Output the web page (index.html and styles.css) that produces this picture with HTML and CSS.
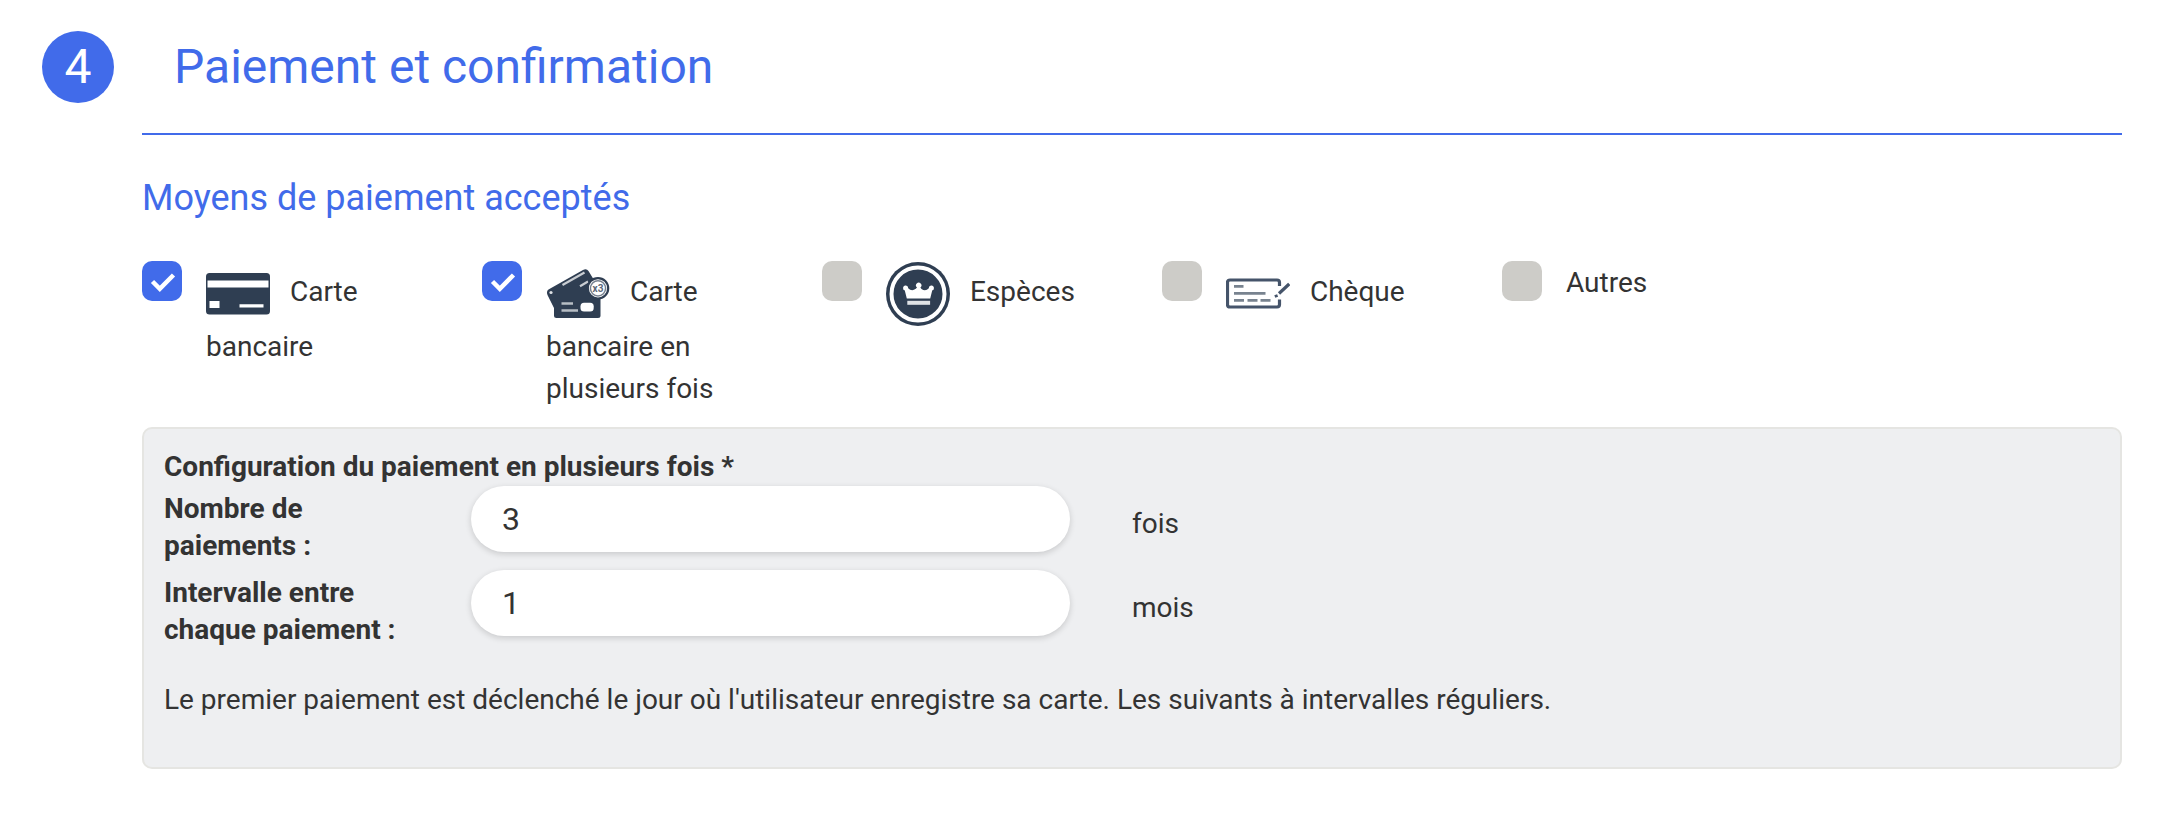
FILE: index.html
```html
<!DOCTYPE html>
<html lang="fr">

<head>
  <meta charset="UTF-8">
  <meta name="viewport" content="width=device-width, initial-scale=1.0">
  <title>Paiement et confirmation</title>
  <link rel="stylesheet" href="styles.css">
</head>

<body>
  <section class="step">
    <header class="step-header">
      <span class="step-number">4</span>
      <h1 class="step-title">Paiement et confirmation</h1>
    </header>

    <div class="step-body">
      <h2 class="section-title">Moyens de paiement acceptés</h2>

      <div class="methods">
        <div class="method">
          <span class="checkbox checked">
            <svg viewBox="0 0 40 40"><path d="M10.500 20.500l7.300 7.300L31.500 14" /></svg>
          </span>
          <div class="method-label">
            <svg class="method-icon" viewBox="0 0 64 64">
              <rect x="0" y="11" width="64" height="41.5" rx="3.5" fill="#2f3e52" />
              <path fill="#fff" d="M1.500 18.500h61v7h-61zM3.500 39h10v7h-10zM33.500 42.300h24v3.200h-24z" />
            </svg>
            <span>Carte</span> bancaire
          </div>
        </div>

        <div class="method">
          <span class="checkbox checked">
            <svg viewBox="0 0 40 40"><path d="M10.500 20.500l7.300 7.300L31.500 14" /></svg>
          </span>
          <div class="method-label">
            <svg class="method-icon" viewBox="0 0 64 64">
              <path fill="#2f3e52" d="M2.500 27.500L37 8q3.500-2 5.500 1L48 18v30H9L1.500 33Q0 29.500 2.500 27.500z" />
              <rect x="8" y="25" width="46.500" height="31" rx="2.500" fill="#2f3e52" />
              <path d="M16.500 23L38.500 10.500M34 24.200l8-4.700" fill="none" stroke="#c9cdd2" stroke-width="2.200" />
              <circle cx="5" cy="30.500" r="1.600" fill="#dfe2e5" />
              <path d="M15.500 41.500h11.500M15.500 48.500h16.500" stroke="#b8bec5" stroke-width="2.600" />
              <rect x="34.500" y="40.700" width="13.200" height="8.800" rx="3.500" fill="#fff" />
              <circle cx="52" cy="26.300" r="10.200" fill="#fff" stroke="#2f3e52" stroke-width="2.200" />
              <circle cx="52" cy="26.300" r="7.600" fill="#fff" stroke="#77818f" stroke-width="1.500" />
              <text x="52" y="29.800" text-anchor="middle" class="badge-text">x3</text>
            </svg>
            <span>Carte</span> bancaire en plusieurs fois
          </div>
        </div>

        <div class="method">
          <span class="checkbox"></span>
          <div class="method-label">
            <svg class="method-icon" viewBox="0 0 64 64">
              <circle cx="32" cy="32" r="32" fill="#2f3e52" />
              <circle cx="32" cy="32" r="26.500" fill="none" stroke="#fff" stroke-width="4" />
              <path fill="#fff" d="M20.800 36.500L18.800 28.500a2.600 2.600 0 1 1 3.400-2.200q3.500 3.500 7.600 0.500L31 25.500a2.700 2.700 0 1 1 3.400 0L35.500 27q4 2.800 7.300-0.700a2.600 2.600 0 1 1 3.400 2.200L44.200 36.500z" />
              <rect x="21.300" y="38.800" width="22.800" height="4" fill="#dfe2e5" />
            </svg>
            <span>Espèces</span>
          </div>
        </div>

        <div class="method">
          <span class="checkbox"></span>
          <div class="method-label">
            <svg class="method-icon" viewBox="0 0 64 64" fill="none" stroke="#45546a">
              <path d="M53.500 24V20.500q0-2.500-2.500-2.500H4q-2.500 0-2.500 2.500V42.500q0 2.500 2.500 2.500h47q2.500 0 2.500-2.500V37.500" stroke-width="3.200" />
              <path d="M8 24.300h9.500M8 31.300h31.500M8 38.300h10M21.500 38.300h10M34.500 38.300h10" stroke="#78838f" stroke-width="2.800" />
              <path d="M53 31.500L63.200 22" stroke-width="3.200" />
              <path d="M48.800 34.500l2.800-1" stroke-width="2.800" />
            </svg>
            <span>Chèque</span>
          </div>
        </div>

        <div class="method">
          <span class="checkbox"></span>
          <div class="method-label">Autres</div>
        </div>
      </div>

      <div class="config">
        <div class="config-title">Configuration du paiement en plusieurs fois *</div>
        <div class="config-row">
          <label class="config-label" for="count">Nombre de paiements :</label>
          <input class="config-input" id="count" type="text" value="3">
          <span class="config-unit">fois</span>
        </div>
        <div class="config-row">
          <label class="config-label" for="interval">Intervalle entre chaque paiement :</label>
          <input class="config-input" id="interval" type="text" value="1">
          <span class="config-unit">mois</span>
        </div>
        <p class="config-note">Le premier paiement est déclenché le jour où l'utilisateur enregistre sa carte. Les suivants à intervalles réguliers.</p>
      </div>
    </div>
  </section>
</body>

</html>
```
FILE: styles.css
```css
* {
  margin: 0;
  padding: 0;
  box-sizing: border-box;
}

body {
  font-family: Roboto, "Liberation Sans", sans-serif;
  font-size: 28px;
  line-height: 42px;
  color: #333;
  background-color: #fff;
}

.step {
  padding: 31px 40px 0 42px;
}

.step-header {
  display: flex;
  align-items: center;
  gap: 60px;
  height: 72px;
}

.step-number {
  width: 72px;
  height: 72px;
  border-radius: 50%;
  background-color: #416bea;
  color: #fff;
  font-size: 48px;
  line-height: 72px;
  text-align: center;
}

.step-title {
  color: #416bea;
  font-size: 48px;
  font-weight: 400;
  line-height: 72px;
}

.step-body {
  margin: 30px 0 0 100px;
  border-top: 2px solid #416bea;
  padding-top: 36px;
}

.section-title {
  color: #416bea;
  font-size: 36px;
  font-weight: 400;
  line-height: 54px;
}

.methods {
  display: flex;
  height: 166px;
  margin-top: 36px;
}

.method {
  display: flex;
  gap: 24px;
  width: 340px;
}

.checkbox {
  flex-shrink: 0;
  width: 40px;
  height: 40px;
  border-radius: 10px;
  background-color: #cdccc8;
}

.checkbox.checked {
  background-color: #416bea;
}

.checkbox svg {
  display: block;
  fill: none;
  stroke: #fff;
  stroke-width: 4.5;
}

.method-label {
  width: 236px;
  padding-top: 1px;
}

.method-icon {
  width: 64px;
  height: 64px;
  margin-right: 13px;
  vertical-align: middle;
}

.badge-text {
  fill: #5b6878;
  font-size: 10px;
  font-weight: 700;
}

.config {
  height: 342px;
  border: 2px solid #e5e5e2;
  border-radius: 10px;
  background-color: #eeeff1;
  padding: 17px 20px;
}

.config-title {
  height: 40px;
  font-weight: 700;
}

.config-row {
  display: flex;
  height: 84px;
}

.config-label {
  width: 250px;
  margin-right: 57px;
  padding-top: 4px;
  font-weight: 700;
  line-height: 37px;
}

.config-input {
  width: 599px;
  height: 66px;
  border: none;
  border-radius: 33px;
  background-color: #fff;
  box-shadow: 0 2px 6px rgba(0, 0, 0, 0.16);
  padding: 0 31px;
  color: #333;
  font-family: inherit;
  font-size: 32px;
}

.config-unit {
  margin-left: 62px;
  padding-top: 17px;
}

.config-note {
  margin-top: 25px;
}
```
